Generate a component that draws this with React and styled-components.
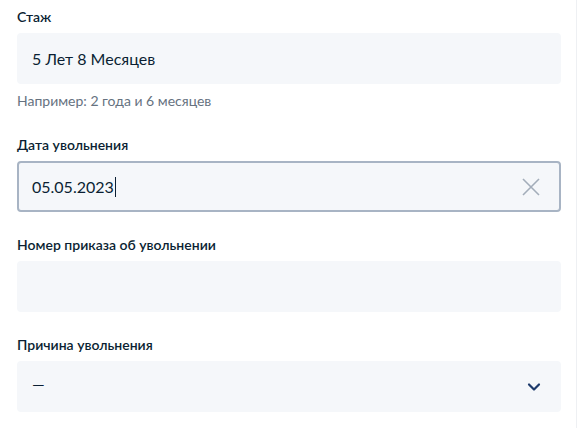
import React from "react";
import styled, { createGlobalStyle } from "styled-components";

const GlobalStyle = createGlobalStyle`
  html, body {
    margin: 0;
    padding: 0;
    background: #ffffff;
  }
  body {
    font-family: Lato, "Noto Sans", sans-serif;
    color: #0b1f33;
  }
`;

const Page = styled.div`
  width: 577px;
  height: 428px;
  border-right: 1px solid #eef0f3;
  box-sizing: border-box;
  padding: 7px 0 0 17px;
  display: flex;
  flex-direction: column;
  gap: 23px;
`;

const Field = styled.div`
  width: 544px;
  display: flex;
  flex-direction: column;
`;

const Label = styled.label`
  font-size: 14px;
  line-height: 19px;
  font-weight: 600;
  color: #0b1f33;
  margin-bottom: 7px;
`;

const Box = styled.div`
  height: 51px;
  box-sizing: border-box;
  border-radius: 4px;
  background: #f5f7fa;
  border: 2px solid ${({ focused }) => (focused ? "#a8b4c4" : "#f5f7fa")};
  padding: 0 18px 0 13px;
  display: flex;
  align-items: center;
  justify-content: space-between;
`;

const Value = styled.span`
  font-size: 16px;
  line-height: 20px;
  color: #0b1f33;
  display: flex;
  align-items: center;
  padding-bottom: ${({ lift }) => lift || 0}px;
`;

const Caret = styled.span`
  display: inline-block;
  width: 1px;
  height: 20px;
  background: #0b1f33;
  margin-left: 1px;
`;

const Hint = styled.div`
  font-size: 14px;
  line-height: 18px;
  color: #66727f;
  margin-top: 8px;
  margin-bottom: 2px;
`;

const IconBtn = styled.span`
  display: flex;
  align-items: center;
  justify-content: center;
`;

const Cross = () => (
  <svg width="20" height="20" viewBox="0 0 20 20" fill="none">
    <path d="M2 2L18 18M18 2L2 18" stroke="#a3adba" strokeWidth="1.6" />
  </svg>
);

const Chevron = () => (
  <svg width="14" height="10" viewBox="0 0 14 10" fill="none">
    <path
      d="M2 2.5L7 7.5L12 2.5"
      stroke="#1d3a6b"
      strokeWidth="2.2"
      strokeLinecap="round"
      strokeLinejoin="round"
    />
  </svg>
);

export default function App() {
  return (
    <>
      <GlobalStyle />
      <Page>
        <Field>
          <Label>Стаж</Label>
          <Box>
            <Value>5 Лет 8 Месяцев</Value>
          </Box>
          <Hint>Например: 2 года и 6 месяцев</Hint>
        </Field>
        <Field>
          <Label>Дата увольнения</Label>
          <Box focused>
            <Value>
              05.05.2023
              <Caret />
            </Value>
            <IconBtn>
              <Cross />
            </IconBtn>
          </Box>
        </Field>
        <Field>
          <Label>Номер приказа об увольнении</Label>
          <Box />
        </Field>
        <Field>
          <Label>Причина увольнения</Label>
          <Box>
            <Value lift={6}>—</Value>
            <IconBtn>
              <Chevron />
            </IconBtn>
          </Box>
        </Field>
      </Page>
    </>
  );
}
